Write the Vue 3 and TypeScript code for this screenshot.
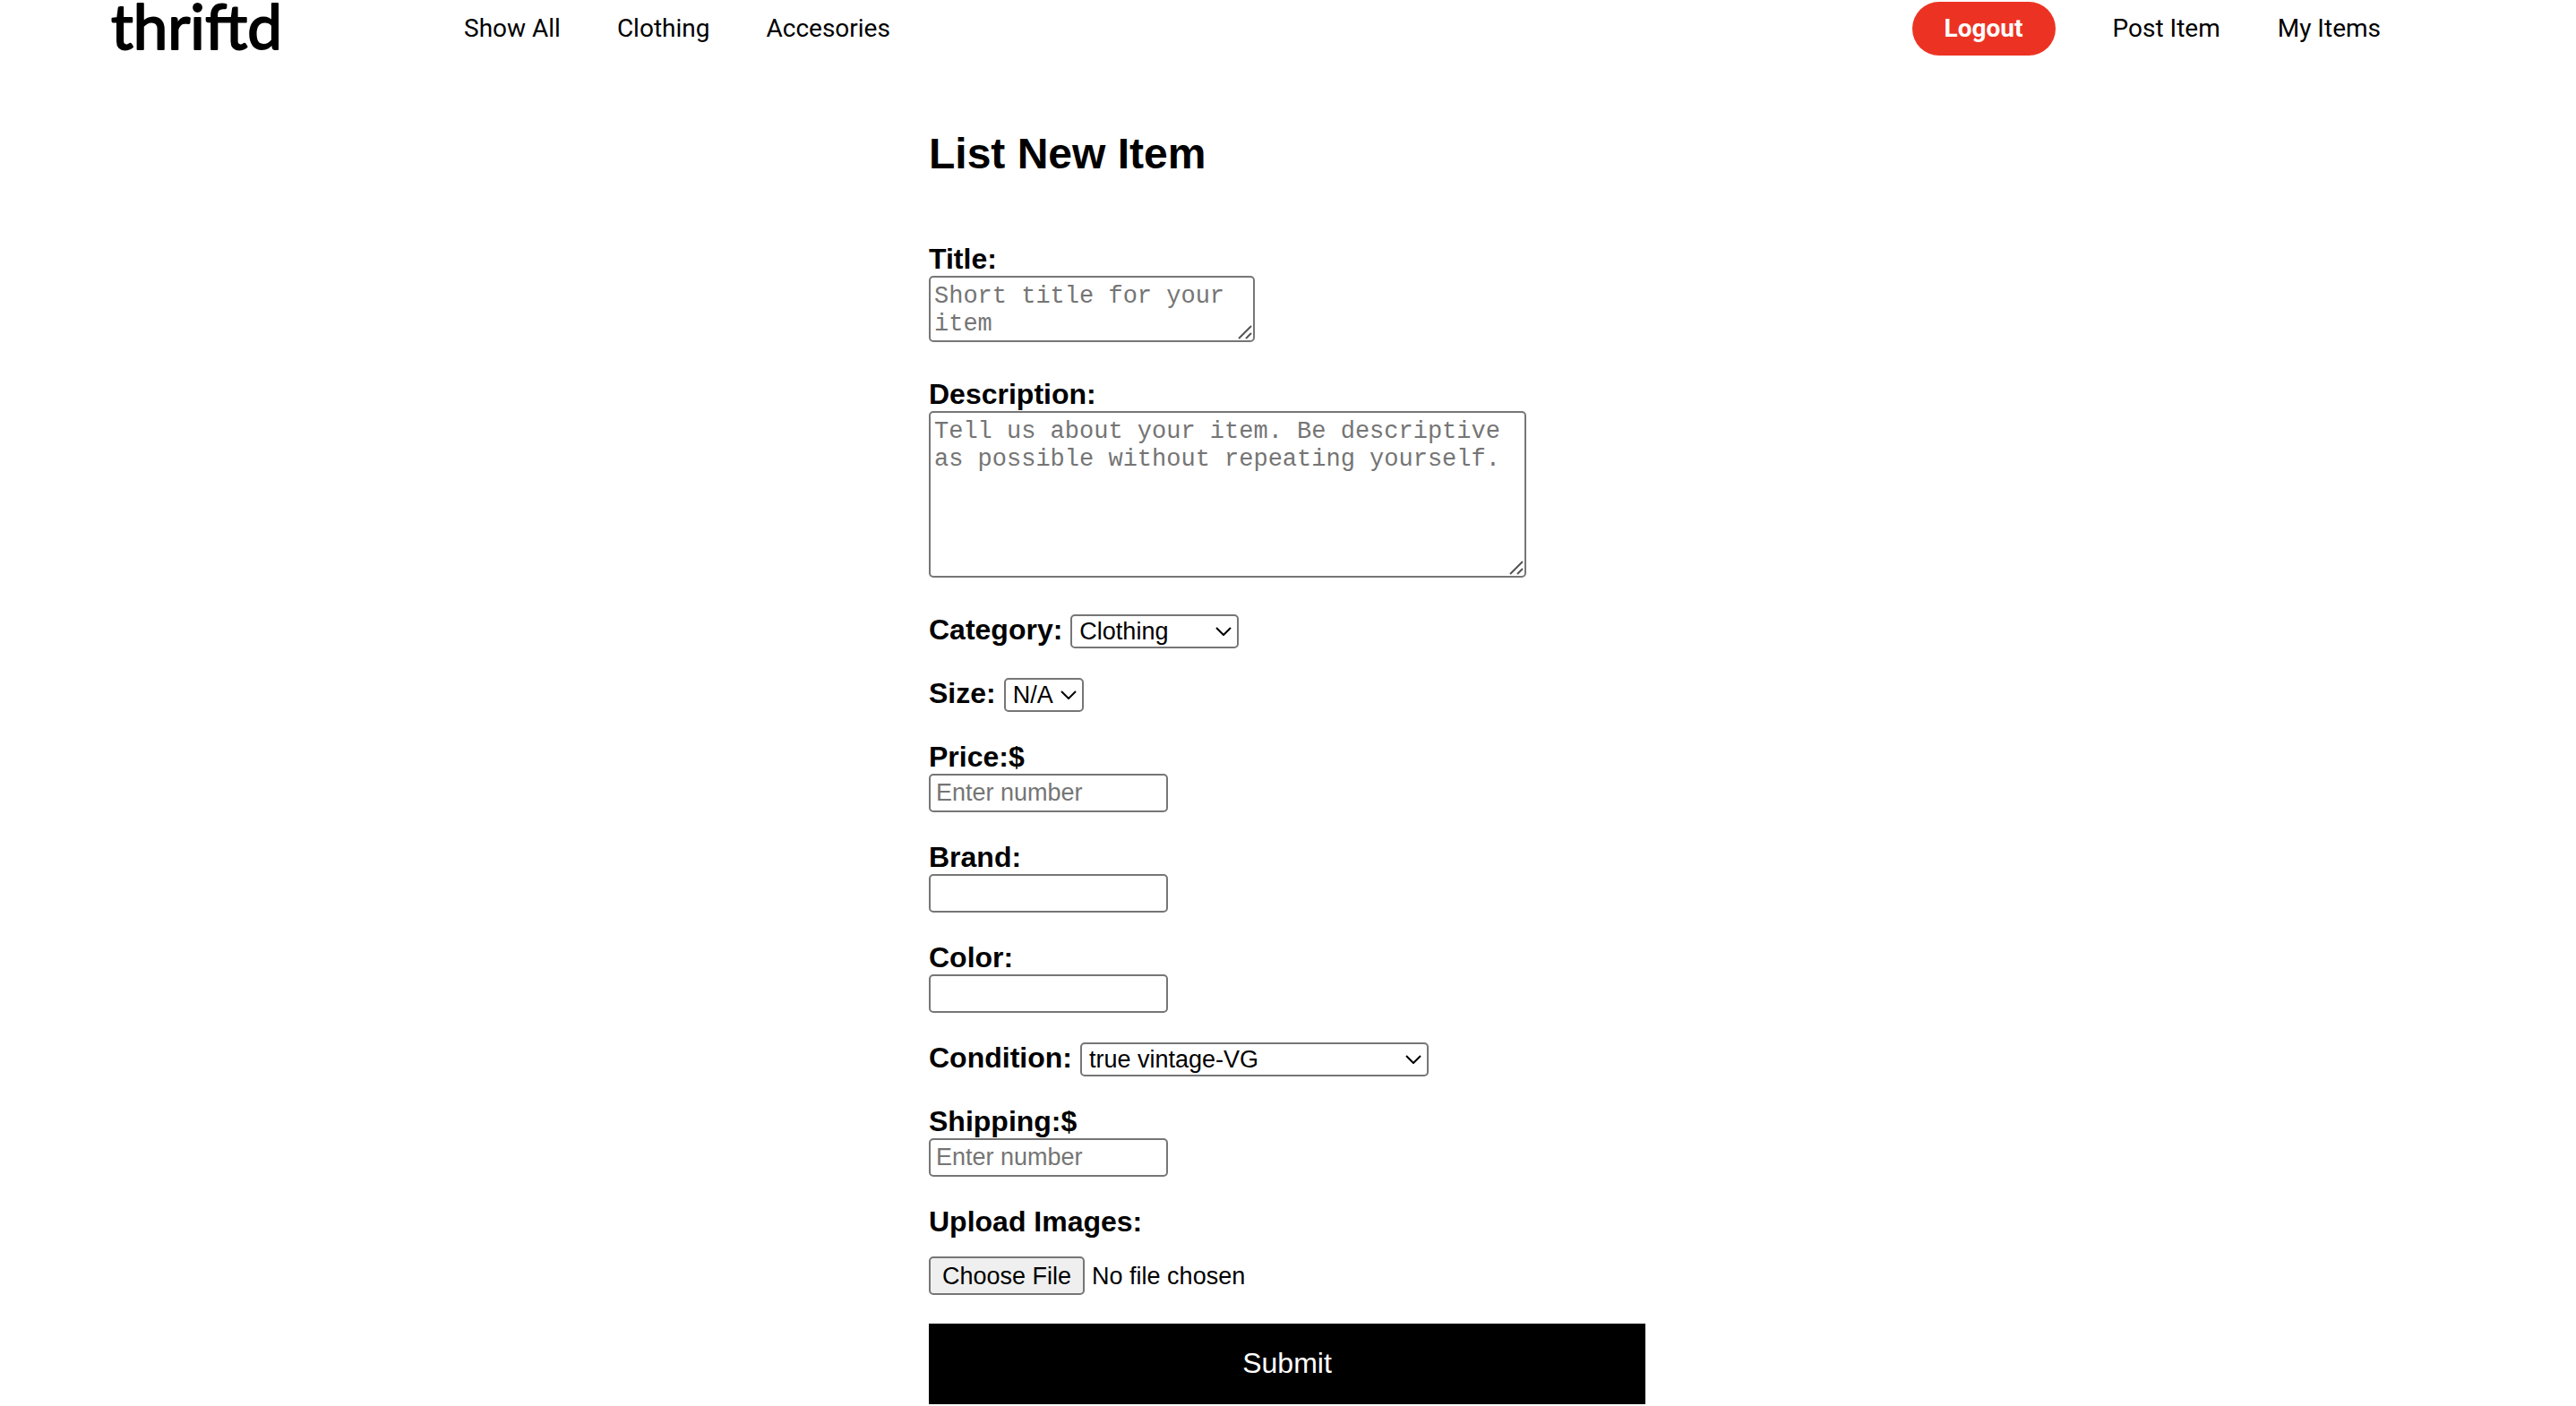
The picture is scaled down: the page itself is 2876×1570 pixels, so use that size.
<script setup lang="ts">
import { ref } from 'vue'

interface NavLink {
  label: string
  href: string
}

const browseLinks: NavLink[] = [
  { label: 'Show All', href: '#all' },
  { label: 'Clothing', href: '#clothing' },
  { label: 'Accesories', href: '#accesories' },
]

const accountLinks: NavLink[] = [
  { label: 'Post Item', href: '#post' },
  { label: 'My Items', href: '#mine' },
]

const title = ref('')
const description = ref('')
const category = ref('Clothing')
const size = ref('N/A')
const price = ref('')
const brand = ref('')
const color = ref('')
const condition = ref('true vintage-VG')
const shipping = ref('')
</script>

<template>
  <header class="bar">
    <a class="logo" href="#home" aria-label="thriftd">
      <svg width="200" height="60" viewBox="0 0 200 60">
        <text x="0" y="53">thriftd</text>
      </svg>
    </a>
    <nav class="links browse">
      <a v-for="link in browseLinks" :key="link.label" :href="link.href">{{ link.label }}</a>
    </nav>
    <nav class="links account">
      <button class="logout" type="button">Logout</button>
      <a v-for="link in accountLinks" :key="link.label" :href="link.href">{{ link.label }}</a>
    </nav>
  </header>

  <main class="page">
    <h1>List New Item</h1>
    <form class="form" @submit.prevent>
      <div class="field area">
        <label for="title">Title:</label>
        <div class="box short">
          <textarea id="title" v-model="title" rows="2" placeholder="Short title for your item"></textarea>
          <svg class="grip" viewBox="0 0 16 16"><path d="M1 15 15 1M9 15l6-6" /></svg>
        </div>
      </div>

      <div class="field area">
        <label for="description">Description:</label>
        <div class="box long">
          <textarea
            id="description"
            v-model="description"
            placeholder="Tell us about your item. Be descriptive as possible without repeating yourself."
          ></textarea>
          <svg class="grip" viewBox="0 0 16 16"><path d="M1 15 15 1M9 15l6-6" /></svg>
        </div>
      </div>

      <div class="row">
        <label for="category">Category:</label>
        <div class="pick medium">
          <select id="category" v-model="category">
            <option>Clothing</option>
            <option>Accesories</option>
          </select>
          <svg class="chevron" viewBox="0 0 18 10"><path d="M1 1l8 8 8-8" /></svg>
        </div>
      </div>

      <div class="row">
        <label for="size">Size:</label>
        <div class="pick small">
          <select id="size" v-model="size">
            <option>N/A</option>
            <option>S</option>
            <option>M</option>
            <option>L</option>
          </select>
          <svg class="chevron" viewBox="0 0 18 10"><path d="M1 1l8 8 8-8" /></svg>
        </div>
      </div>

      <div class="field">
        <label for="price">Price:$</label>
        <input id="price" v-model="price" class="line" type="text" inputmode="decimal" placeholder="Enter number" />
      </div>

      <div class="field">
        <label for="brand">Brand:</label>
        <input id="brand" v-model="brand" class="line" type="text" />
      </div>

      <div class="field">
        <label for="color">Color:</label>
        <input id="color" v-model="color" class="line" type="text" />
      </div>

      <div class="row">
        <label for="condition">Condition:</label>
        <div class="pick large">
          <select id="condition" v-model="condition">
            <option>true vintage-VG</option>
            <option>new with tags</option>
          </select>
          <svg class="chevron" viewBox="0 0 18 10"><path d="M1 1l8 8 8-8" /></svg>
        </div>
      </div>

      <div class="field">
        <label for="shipping">Shipping:$</label>
        <input id="shipping" v-model="shipping" class="line" type="text" inputmode="decimal" placeholder="Enter number" />
      </div>

      <div class="field upload">
        <label for="images">Upload Images:</label>
        <input id="images" class="file" type="file" />
      </div>

      <button class="submit" type="submit">Submit</button>
    </form>
  </main>
</template>

<style>
body {
  background: #fff;
}
</style>

<style scoped>
* {
  box-sizing: border-box;
}

.bar {
  display: flex;
  align-items: center;
  padding: 2px 218px 0 124px;
  font-family: Roboto, sans-serif;
  font-size: 28px;
  line-height: 32px;
}

.logo,
.logo svg {
  display: block;
  overflow: visible;
}

.logo text {
  font-family: Lato, sans-serif;
  font-size: 69px;
  fill: #000;
  stroke: #000;
  stroke-width: 2px;
  stroke-linejoin: round;
}

.links {
  display: flex;
  align-items: center;
  gap: 64px;
}

.links a {
  color: #000;
  text-decoration: none;
}

.browse {
  gap: 63px;
  margin-left: 194px;
}

.account {
  margin-left: auto;
}

.logout {
  height: 60px;
  padding: 0 36px;
  border: 0;
  border-radius: 30px;
  background: #ec3323;
  color: #fff;
  font: bold 28px/32px Roboto, sans-serif;
}

.page {
  max-width: 802px;
  margin: 82px auto 0;
  padding: 0 2px 2px 0;
  color: #000;
  font-family: 'Liberation Sans', Arial, sans-serif;
}

h1 {
  margin: 0 0 72px;
  font-size: 48px;
  line-height: 55px;
}

.form {
  display: flex;
  flex-direction: column;
  gap: 32px;
}

label {
  font-size: 32px;
  font-weight: bold;
  line-height: 37px;
}

.field {
  display: flex;
  flex-direction: column;
  align-items: flex-start;
}

.area {
  padding-bottom: 8px;
}

.row {
  display: flex;
  gap: 9px;
}

.box,
.pick {
  display: grid;
}

.box > *,
.pick > * {
  grid-area: 1 / 1;
}

.short {
  width: 364px;
  height: 74px;
}

.long {
  width: 667px;
  height: 186px;
}

textarea,
.line,
select {
  margin: 0;
  border: 2px solid #767676;
  border-radius: 5px;
  background: #fff;
  color: #000;
}

textarea {
  padding: 6px 4px 0;
  overflow: hidden;
  resize: none;
  font: 27px/31px 'Liberation Mono', 'Courier New', monospace;
}

::placeholder {
  color: #757575;
  opacity: 1;
}

.grip {
  align-self: end;
  justify-self: end;
  width: 16px;
  height: 16px;
  margin: 0 3px 3px 0;
  fill: none;
  stroke: #555;
  stroke-width: 2;
  pointer-events: none;
}

.pick {
  height: 38px;
  margin-top: 1px;
}

.small {
  width: 89px;
}

.medium {
  width: 188px;
}

.large {
  width: 389px;
}

select {
  appearance: none;
  padding: 0 8px;
  font: 27px/32px 'Liberation Sans', Arial, sans-serif;
}

.chevron {
  align-self: center;
  justify-self: end;
  width: 18px;
  height: 10px;
  margin-right: 8px;
  fill: none;
  stroke: #000;
  stroke-width: 2;
  pointer-events: none;
}

.line {
  width: 267px;
  height: 43px;
  padding: 0 6px;
  font: 27px/32px 'Liberation Sans', Arial, sans-serif;
}

.upload {
  gap: 20px;
}

.file {
  width: 100%;
  height: 43px;
  font: 27px/32px 'Liberation Sans', Arial, sans-serif;
}

.file::file-selector-button {
  height: 43px;
  margin: 0 8px 0 0;
  padding: 0 13px;
  border: 2px solid #767676;
  border-radius: 5px;
  background: #efefef;
  color: #000;
  font: inherit;
}

.submit {
  height: 90px;
  padding: 0 0 2px;
  border: 0;
  background: #000;
  color: #fff;
  font: 32px/37px 'Liberation Sans', Arial, sans-serif;
}
</style>
